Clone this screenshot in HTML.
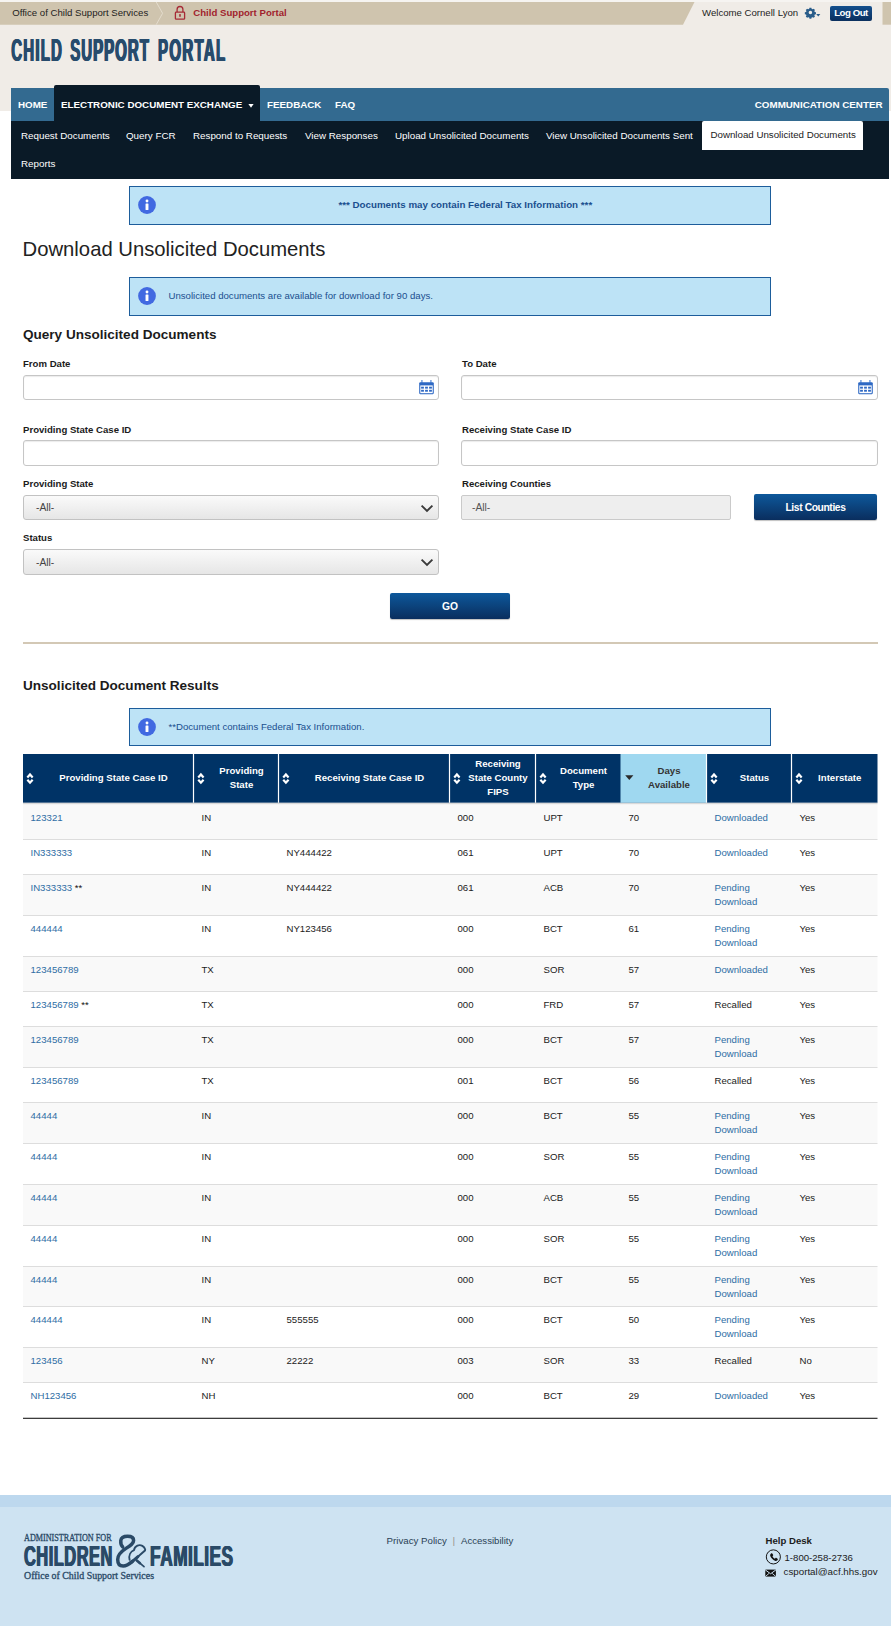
<!DOCTYPE html>
<html lang="en">
<head>
<meta charset="utf-8">
<title>Child Support Portal - Download Unsolicited Documents</title>
<style>
*{box-sizing:border-box;margin:0;padding:0}
html,body{width:891px;height:1626px;background:#fff;overflow:hidden}
body{font-family:"Liberation Sans",sans-serif;font-size:9.625px;color:#1b1b1b;position:relative}
a{text-decoration:none;color:#2e6da4}
.abs{position:absolute}
/* header */
#hdrbg{left:0;top:0;width:891px;height:110.7px;background:#f0ece7}
#welcome{left:702px;top:7px;font-size:9.625px;color:#1d1d1d;white-space:nowrap}
#logout{left:830px;top:6px;width:42px;height:14.5px;background:linear-gradient(#15508d,#0a2f5e);color:#fff;font-size:9.625px;font-weight:bold;text-align:center;line-height:14.5px;border-radius:2px;letter-spacing:-0.45px}
/* nav */
#nav{left:11px;top:88px;width:877.7px;height:32.6px;background:#336a90;border-radius:0 2px 0 0}
#nav span{position:absolute;top:11px;font-size:9.8px;font-weight:bold;color:#fff;white-space:nowrap}
#navtab{left:54px;top:85px;width:206px;height:36.5px;background:#0a1a27;border-radius:2px 2px 0 0}
#subnav{left:11px;top:120.5px;width:877.7px;height:58px;background:#0a1a27}
.sn{font-size:9.8px;color:#fff;white-space:nowrap}
#subsel{left:701.8px;top:121.3px;width:161.2px;height:28.6px;background:#fff;border-radius:2px 2px 0 0}
/* info boxes */
.info{background:#bde3f6;border:1px solid #1d5d9b;height:39px;left:129px;width:642px;font-size:9.625px;color:#1a4f8f}
.info .ic{position:absolute;left:7px;top:8px;width:20px;height:20px}
.info .tx{position:absolute;left:38.5px;top:12px;white-space:nowrap}
h1{font-weight:normal;font-size:20.25px;color:#222;left:22.6px;top:237.5px;white-space:nowrap}
h2{font-weight:bold;font-size:13.55px;color:#1b1b1b;white-space:nowrap}
.lbl{font-size:9.6px;font-weight:bold;color:#1b1b1b;white-space:nowrap}
.inp{height:26px;border:1px solid #c6c6c6;border-radius:3px;background:#fff;box-shadow:inset 0 1px 1px rgba(0,0,0,.08)}
.sel{height:25px;border:1px solid #c2c2c2;border-radius:3px;background:linear-gradient(#fafafa,#e6e6e6);font-size:10.3px;color:#444;line-height:24px;padding-left:12px}
.dis{height:24px;border:1px solid #cacaca;border-radius:2px;background:#eeeeee;font-size:10.3px;color:#555;line-height:23.6px;padding-left:10px}
.btn{height:25px;border-radius:2px;background:linear-gradient(#0d589b,#0a2e5e);color:#fff;font-size:10.3px;font-weight:bold;text-align:center;line-height:25px;box-shadow:0 1px 1px rgba(0,0,0,.25)}
#hr{left:23px;top:642px;width:854.6px;height:2px;background:#d3c8b5}
/* table */
.th{font-size:9.625px;font-weight:bold;line-height:14px;text-align:center;white-space:nowrap}
.td{font-size:9.625px;line-height:13.75px;color:#1b1b1b;white-space:nowrap}
.td a{color:#2e6da4}
.st{color:#111}
/* footer */
#ftop{left:0;top:1495px;width:891px;height:12px;background:#bdd8ee}
#foot{left:0;top:1507px;width:891px;height:119px;background:#cee3f2}
</style>
</head>
<body>
<div class="abs" id="hdrbg"></div>
<svg class="abs" style="left:0;top:0" width="891" height="26" viewBox="0 0 891 26">
  <rect x="0" y="0" width="891" height="2" fill="#f6f4f1"/>
  <polygon points="0,2 694.5,2 683,24.7 0,24.7" fill="#cfc4ae"/>
  <rect x="882.5" y="2" width="8.5" height="22.7" fill="#cfc4ae"/>
  <polyline points="156.2,2 162.6,13.3 156.2,24.7" fill="none" stroke="#e4dccd" stroke-width="1"/>
  <g fill="none" stroke="#a62a36" stroke-width="1.3">
    <path d="M177.1 12v-2.6a2.9 2.9 0 0 1 5.8 0V12"/>
    <rect x="175.4" y="12.2" width="9.2" height="7" rx="0.8"/>
  </g>
  <path d="M179 14.3h2l-0.5 2.6h-1z" fill="#a62a36"/>
  <g transform="translate(810.4,12.5) scale(0.93)" fill="#2a5d8a">
    <path d="M-1 -5.2h2l.3 1.3 1.1.45 1.15-.7 1.4 1.4-.7 1.15.45 1.1 1.3.3v2l-1.3.3-.45 1.1.7 1.15-1.4 1.4-1.15-.7-1.1.45-.3 1.3h-2l-.3-1.3-1.1-.45-1.15.7-1.4-1.4.7-1.15-.45-1.1-1.3-.3v-2l1.3-.3.45-1.1-.7-1.15 1.4-1.4 1.15.7 1.1-.45z M0 -1.9a1.9 1.9 0 1 0 0 3.8a1.9 1.9 0 1 0 0-3.8z" fill-rule="evenodd"/>
    </g>
  <path d="M816.2 13.9h4.1l-2.05 2.5z" fill="#2a5d8a"/>
</svg>
<div class="abs t1" style="left:12.2px;top:7px;font-size:9.625px;color:#1d1d1d;white-space:nowrap">Office of Child Support Services</div>
<div class="abs t2" style="left:193.3px;top:7px;font-size:9.625px;color:#a11f2d;font-weight:bold;white-space:nowrap">Child Support Portal</div>
<div class="abs" id="welcome">Welcome Cornell Lyon</div>
<div class="abs" id="logout">Log Out</div>
<svg class="abs" style="left:0;top:30px" width="240" height="40" viewBox="0 0 240 40"><g font-family="Liberation Sans, sans-serif" font-weight="bold" font-size="32" fill="#274b6c"><text transform="translate(10.75,30.6) scale(0.47,1)" textLength="107.7" lengthAdjust="spacing">CHILD</text><text transform="translate(11.30,30.6) scale(0.47,1)" textLength="107.7" lengthAdjust="spacing">CHILD</text><text transform="translate(11.85,30.6) scale(0.47,1)" textLength="107.7" lengthAdjust="spacing">CHILD</text><text transform="translate(69.75,30.6) scale(0.47,1)" textLength="167.2" lengthAdjust="spacing">SUPPORT</text><text transform="translate(70.30,30.6) scale(0.47,1)" textLength="167.2" lengthAdjust="spacing">SUPPORT</text><text transform="translate(70.85,30.6) scale(0.47,1)" textLength="167.2" lengthAdjust="spacing">SUPPORT</text><text transform="translate(157.45,30.6) scale(0.47,1)" textLength="143.0" lengthAdjust="spacing">PORTAL</text><text transform="translate(158.00,30.6) scale(0.47,1)" textLength="143.0" lengthAdjust="spacing">PORTAL</text><text transform="translate(158.55,30.6) scale(0.47,1)" textLength="143.0" lengthAdjust="spacing">PORTAL</text></g></svg>
<!--TITLE-->
<div class="abs" id="nav">
  <span style="left:7px">HOME</span>
  <span style="left:256px">FEEDBACK</span>
  <span style="left:324px">FAQ</span>
  <span style="right:6.2px">COMMUNICATION CENTER</span>
</div>
<div class="abs" id="navtab"></div>
<div class="abs" id="subnav"></div>
<div class="abs" id="subsel"></div>
<div class="abs" id="subtxt">
  <span class="abs sn" style="left:21px;top:130px">Request Documents</span>
  <span class="abs sn" style="left:126px;top:130px">Query FCR</span>
  <span class="abs sn" style="left:193px;top:130px">Respond to Requests</span>
  <span class="abs sn" style="left:305px;top:130px">View Responses</span>
  <span class="abs sn" style="left:395px;top:130px">Upload Unsolicited Documents</span>
  <span class="abs sn" style="left:546px;top:130px">View Unsolicited Documents Sent</span>
  <span class="abs sn" style="left:710.5px;top:129px;color:#222;font-size:9.72px">Download Unsolicited Documents</span>
  <span class="abs sn" style="left:21px;top:158px">Reports</span>
</div>
<div class="abs" id="tabtxt" style="left:61px;top:99px;font-size:9.8px;font-weight:bold;color:#fff;white-space:nowrap">ELECTRONIC DOCUMENT EXCHANGE</div>
<svg class="abs" style="left:247px;top:102px" width="8" height="8" viewBox="0 0 8 8"><path d="M1.4 2.1h5.2L4 5.8z" fill="#fff"/></svg>

<div class="abs info" style="top:186px">
  <svg class="ic" viewBox="0 0 20 20"><circle cx="10" cy="10" r="8.9" fill="#4169e1"/><circle cx="10" cy="6" r="1.45" fill="#fff"/><rect x="8.55" y="8.5" width="2.9" height="6.4" rx="0.5" fill="#fff"/></svg>
  <div class="abs" style="left:0;top:11.7px;width:670.6px;text-align:center;font-weight:bold;white-space:nowrap;font-size:9.78px">*** Documents may contain Federal Tax Information ***</div>
</div>
<h1 class="abs">Download Unsolicited Documents</h1>
<div class="abs info" style="top:277px">
  <svg class="ic" viewBox="0 0 20 20"><circle cx="10" cy="10" r="8.9" fill="#4169e1"/><circle cx="10" cy="6" r="1.45" fill="#fff"/><rect x="8.55" y="8.5" width="2.9" height="6.4" rx="0.5" fill="#fff"/></svg>
  <div class="tx">Unsolicited documents are available for download for 90 days.</div>
</div>
<h2 class="abs" style="left:23px;top:327px">Query Unsolicited Documents</h2>

<div class="abs lbl" style="left:23px;top:358px">From Date</div>
<div class="abs inp" style="left:23px;top:375px;width:416px;height:25px"></div>
<svg class="abs" style="left:419px;top:380px" width="15" height="15" viewBox="0 0 15 15"><rect x="2.1" y="0" width="1.6" height="3.6" fill="#7ea6e0"/><rect x="11.1" y="0" width="1.6" height="3.6" fill="#7ea6e0"/><rect x="0.2" y="2.2" width="14.6" height="12" rx="1.1" fill="#2d68c4"/><rect x="1.3" y="5.4" width="12.4" height="7.8" fill="#fff"/><g fill="#2d68c4"><rect x="2.1" y="6.7" width="2.8" height="1.9"/><rect x="6.1" y="6.7" width="2.8" height="1.9"/><rect x="10.1" y="6.7" width="2.8" height="1.9"/><rect x="2.1" y="9.8" width="2.8" height="1.9"/><rect x="6.1" y="9.8" width="2.8" height="1.9"/><rect x="10.1" y="9.8" width="2.8" height="1.9"/></g></svg>
<div class="abs lbl" style="left:462px;top:358px">To Date</div>
<div class="abs inp" style="left:461px;top:375px;width:417px;height:25px"></div>
<svg class="abs" style="left:858px;top:380px" width="15" height="15" viewBox="0 0 15 15"><rect x="2.1" y="0" width="1.6" height="3.6" fill="#7ea6e0"/><rect x="11.1" y="0" width="1.6" height="3.6" fill="#7ea6e0"/><rect x="0.2" y="2.2" width="14.6" height="12" rx="1.1" fill="#2d68c4"/><rect x="1.3" y="5.4" width="12.4" height="7.8" fill="#fff"/><g fill="#2d68c4"><rect x="2.1" y="6.7" width="2.8" height="1.9"/><rect x="6.1" y="6.7" width="2.8" height="1.9"/><rect x="10.1" y="6.7" width="2.8" height="1.9"/><rect x="2.1" y="9.8" width="2.8" height="1.9"/><rect x="6.1" y="9.8" width="2.8" height="1.9"/><rect x="10.1" y="9.8" width="2.8" height="1.9"/></g></svg>
<div class="abs lbl" style="left:23px;top:424px">Providing State Case ID</div>
<div class="abs inp" style="left:23px;top:440px;width:416px"></div>
<div class="abs lbl" style="left:462px;top:424px">Receiving State Case ID</div>
<div class="abs inp" style="left:461px;top:440px;width:417px"></div>
<div class="abs lbl" style="left:23px;top:478px">Providing State</div>
<div class="abs sel" style="left:23px;top:495px;width:415.6px;height:24.5px">-All-</div>
<svg class="abs" style="left:419.5px;top:503.7px" width="14" height="9" viewBox="0 0 14 9"><path d="M1.6 1.6L7 6.9L12.4 1.6" fill="none" stroke="#3a3a3a" stroke-width="1.9"/></svg>
<div class="abs lbl" style="left:462px;top:478px">Receiving Counties</div>
<div class="abs dis" style="left:461px;top:495px;width:270px;height:25px">-All-</div>
<div class="abs btn" style="left:754px;top:494px;width:123px;height:25.6px;line-height:28.4px;letter-spacing:-0.4px">List Counties</div>
<div class="abs lbl" style="left:23px;top:532px">Status</div>
<div class="abs sel" style="left:23px;top:549px;width:415.6px;height:26px;line-height:25px">-All-</div>
<svg class="abs" style="left:419.5px;top:558.2px" width="14" height="9" viewBox="0 0 14 9"><path d="M1.6 1.6L7 6.9L12.4 1.6" fill="none" stroke="#3a3a3a" stroke-width="1.9"/></svg>
<div class="abs btn" style="left:390px;top:593px;width:120px;height:25.6px;line-height:28.4px">GO</div>
<div class="abs" id="hr"></div>

<h2 class="abs" style="left:23px;top:678px">Unsolicited Document Results</h2>
<div class="abs info" style="top:708px;height:38px">
  <svg class="ic" viewBox="0 0 20 20"><circle cx="10" cy="10" r="8.9" fill="#4169e1"/><circle cx="10" cy="6" r="1.45" fill="#fff"/><rect x="8.55" y="8.5" width="2.9" height="6.4" rx="0.5" fill="#fff"/></svg>
  <div class="tx">**Document contains Federal Tax Information.</div>
</div>
<!--TABLE-->
<svg class="abs" style="left:23.0px;top:754.0px" width="854.5" height="666.0" viewBox="0 0 854.5 666.0">
<rect x="0" y="0" width="854.5" height="48.8" fill="#003366"/>
<rect x="597.5" y="0" width="85.8" height="48.8" fill="#9fd8f0"/>
<rect x="169.9" y="0" width="1.2" height="48.8" fill="#fff"/>
<rect x="254.9" y="0" width="1.2" height="48.8" fill="#fff"/>
<rect x="425.9" y="0" width="1.2" height="48.8" fill="#fff"/>
<rect x="511.9" y="0" width="1.2" height="48.8" fill="#fff"/>
<rect x="682.9" y="0" width="1.2" height="48.8" fill="#fff"/>
<rect x="767.9" y="0" width="1.2" height="48.8" fill="#fff"/>
<rect x="0" y="50.0" width="854.5" height="35" fill="#f9f9f9"/>
<rect x="0" y="121.0" width="854.5" height="40" fill="#f9f9f9"/>
<rect x="0" y="203.0" width="854.5" height="34" fill="#f9f9f9"/>
<rect x="0" y="273.0" width="854.5" height="40" fill="#f9f9f9"/>
<rect x="0" y="349.0" width="854.5" height="40" fill="#f9f9f9"/>
<rect x="0" y="431.0" width="854.5" height="40" fill="#f9f9f9"/>
<rect x="0" y="513.0" width="854.5" height="39" fill="#f9f9f9"/>
<rect x="0" y="594.0" width="854.5" height="34" fill="#f9f9f9"/>
<rect x="0" y="48.8" width="854.5" height="1.4" fill="#d9d9d9"/>
<rect x="0" y="85.0" width="854.5" height="1" fill="#dddddd"/>
<rect x="0" y="120.0" width="854.5" height="1" fill="#dddddd"/>
<rect x="0" y="161.0" width="854.5" height="1" fill="#dddddd"/>
<rect x="0" y="202.0" width="854.5" height="1" fill="#dddddd"/>
<rect x="0" y="237.0" width="854.5" height="1" fill="#dddddd"/>
<rect x="0" y="272.0" width="854.5" height="1" fill="#dddddd"/>
<rect x="0" y="313.0" width="854.5" height="1" fill="#dddddd"/>
<rect x="0" y="348.0" width="854.5" height="1" fill="#dddddd"/>
<rect x="0" y="389.0" width="854.5" height="1" fill="#dddddd"/>
<rect x="0" y="430.0" width="854.5" height="1" fill="#dddddd"/>
<rect x="0" y="471.0" width="854.5" height="1" fill="#dddddd"/>
<rect x="0" y="512.0" width="854.5" height="1" fill="#dddddd"/>
<rect x="0" y="552.0" width="854.5" height="1" fill="#dddddd"/>
<rect x="0" y="593.0" width="854.5" height="1" fill="#dddddd"/>
<rect x="0" y="628.0" width="854.5" height="1" fill="#dddddd"/>
<rect x="0" y="663.75" width="854.5" height="1.1" fill="#1c1c1c"/>
<g transform="translate(7.0,24.4)" fill="none" stroke="#fff" stroke-width="2.2" stroke-linecap="butt" stroke-linejoin="miter"><path d="M-2.65 -1.0L0 -3.9L2.65 -1.0"/><path d="M-2.65 1.4L0 4.3L2.65 1.4"/></g>
<g transform="translate(177.9,24.4)" fill="none" stroke="#fff" stroke-width="2.2" stroke-linecap="butt" stroke-linejoin="miter"><path d="M-2.65 -1.0L0 -3.9L2.65 -1.0"/><path d="M-2.65 1.4L0 4.3L2.65 1.4"/></g>
<g transform="translate(262.9,24.4)" fill="none" stroke="#fff" stroke-width="2.2" stroke-linecap="butt" stroke-linejoin="miter"><path d="M-2.65 -1.0L0 -3.9L2.65 -1.0"/><path d="M-2.65 1.4L0 4.3L2.65 1.4"/></g>
<g transform="translate(433.9,24.4)" fill="none" stroke="#fff" stroke-width="2.2" stroke-linecap="butt" stroke-linejoin="miter"><path d="M-2.65 -1.0L0 -3.9L2.65 -1.0"/><path d="M-2.65 1.4L0 4.3L2.65 1.4"/></g>
<g transform="translate(520.0,24.4)" fill="none" stroke="#fff" stroke-width="2.2" stroke-linecap="butt" stroke-linejoin="miter"><path d="M-2.65 -1.0L0 -3.9L2.65 -1.0"/><path d="M-2.65 1.4L0 4.3L2.65 1.4"/></g>
<g transform="translate(691.0,24.4)" fill="none" stroke="#fff" stroke-width="2.2" stroke-linecap="butt" stroke-linejoin="miter"><path d="M-2.65 -1.0L0 -3.9L2.65 -1.0"/><path d="M-2.65 1.4L0 4.3L2.65 1.4"/></g>
<g transform="translate(776.0,24.4)" fill="none" stroke="#fff" stroke-width="2.2" stroke-linecap="butt" stroke-linejoin="miter"><path d="M-2.65 -1.0L0 -3.9L2.65 -1.0"/><path d="M-2.65 1.4L0 4.3L2.65 1.4"/></g>
<path d="M602.2 21.3h8.2l-4.1 4.8z" fill="#2b2b2b"/>
</svg>
<div class="abs th" style="left:36.5px;top:771.4px;width:154px;color:#fff">Providing State Case ID</div>
<div class="abs th" style="left:207.5px;top:764.4px;width:68px;color:#fff">Providing<br>State</div>
<div class="abs th" style="left:292.5px;top:771.4px;width:154px;color:#fff">Receiving State Case ID</div>
<div class="abs th" style="left:463.5px;top:757.4px;width:69px;color:#fff">Receiving<br>State County<br>FIPS</div>
<div class="abs th" style="left:549.5px;top:764.4px;width:68px;color:#fff">Document<br>Type</div>
<div class="abs th" style="left:634.5px;top:764.4px;width:69px;color:#333">Days<br>Available</div>
<div class="abs th" style="left:720.5px;top:771.4px;width:68px;color:#fff">Status</div>
<div class="abs th" style="left:805.5px;top:771.4px;width:68.5px;color:#fff">Interstate</div>
<div class="abs td" style="left:30.5px;top:811.0px"><a>123321</a></div>
<div class="abs td" style="left:201.5px;top:811.0px">IN</div>
<div class="abs td" style="left:457.5px;top:811.0px">000</div>
<div class="abs td" style="left:543.5px;top:811.0px">UPT</div>
<div class="abs td" style="left:628.5px;top:811.0px">70</div>
<div class="abs td" style="left:714.5px;top:811.0px"><a>Downloaded</a></div>
<div class="abs td" style="left:799.5px;top:811.0px">Yes</div>
<div class="abs td" style="left:30.5px;top:846.0px"><a>IN333333</a></div>
<div class="abs td" style="left:201.5px;top:846.0px">IN</div>
<div class="abs td" style="left:286.5px;top:846.0px">NY444422</div>
<div class="abs td" style="left:457.5px;top:846.0px">061</div>
<div class="abs td" style="left:543.5px;top:846.0px">UPT</div>
<div class="abs td" style="left:628.5px;top:846.0px">70</div>
<div class="abs td" style="left:714.5px;top:846.0px"><a>Downloaded</a></div>
<div class="abs td" style="left:799.5px;top:846.0px">Yes</div>
<div class="abs td" style="left:30.5px;top:881.0px"><a>IN333333</a><span class="st"> **</span></div>
<div class="abs td" style="left:201.5px;top:881.0px">IN</div>
<div class="abs td" style="left:286.5px;top:881.0px">NY444422</div>
<div class="abs td" style="left:457.5px;top:881.0px">061</div>
<div class="abs td" style="left:543.5px;top:881.0px">ACB</div>
<div class="abs td" style="left:628.5px;top:881.0px">70</div>
<div class="abs td" style="left:714.5px;top:881.0px"><a>Pending<br>Download</a></div>
<div class="abs td" style="left:799.5px;top:881.0px">Yes</div>
<div class="abs td" style="left:30.5px;top:922.0px"><a>444444</a></div>
<div class="abs td" style="left:201.5px;top:922.0px">IN</div>
<div class="abs td" style="left:286.5px;top:922.0px">NY123456</div>
<div class="abs td" style="left:457.5px;top:922.0px">000</div>
<div class="abs td" style="left:543.5px;top:922.0px">BCT</div>
<div class="abs td" style="left:628.5px;top:922.0px">61</div>
<div class="abs td" style="left:714.5px;top:922.0px"><a>Pending<br>Download</a></div>
<div class="abs td" style="left:799.5px;top:922.0px">Yes</div>
<div class="abs td" style="left:30.5px;top:963.0px"><a>123456789</a></div>
<div class="abs td" style="left:201.5px;top:963.0px">TX</div>
<div class="abs td" style="left:457.5px;top:963.0px">000</div>
<div class="abs td" style="left:543.5px;top:963.0px">SOR</div>
<div class="abs td" style="left:628.5px;top:963.0px">57</div>
<div class="abs td" style="left:714.5px;top:963.0px"><a>Downloaded</a></div>
<div class="abs td" style="left:799.5px;top:963.0px">Yes</div>
<div class="abs td" style="left:30.5px;top:998.0px"><a>123456789</a><span class="st"> **</span></div>
<div class="abs td" style="left:201.5px;top:998.0px">TX</div>
<div class="abs td" style="left:457.5px;top:998.0px">000</div>
<div class="abs td" style="left:543.5px;top:998.0px">FRD</div>
<div class="abs td" style="left:628.5px;top:998.0px">57</div>
<div class="abs td" style="left:714.5px;top:998.0px">Recalled</div>
<div class="abs td" style="left:799.5px;top:998.0px">Yes</div>
<div class="abs td" style="left:30.5px;top:1033.0px"><a>123456789</a></div>
<div class="abs td" style="left:201.5px;top:1033.0px">TX</div>
<div class="abs td" style="left:457.5px;top:1033.0px">000</div>
<div class="abs td" style="left:543.5px;top:1033.0px">BCT</div>
<div class="abs td" style="left:628.5px;top:1033.0px">57</div>
<div class="abs td" style="left:714.5px;top:1033.0px"><a>Pending<br>Download</a></div>
<div class="abs td" style="left:799.5px;top:1033.0px">Yes</div>
<div class="abs td" style="left:30.5px;top:1074.0px"><a>123456789</a></div>
<div class="abs td" style="left:201.5px;top:1074.0px">TX</div>
<div class="abs td" style="left:457.5px;top:1074.0px">001</div>
<div class="abs td" style="left:543.5px;top:1074.0px">BCT</div>
<div class="abs td" style="left:628.5px;top:1074.0px">56</div>
<div class="abs td" style="left:714.5px;top:1074.0px">Recalled</div>
<div class="abs td" style="left:799.5px;top:1074.0px">Yes</div>
<div class="abs td" style="left:30.5px;top:1109.0px"><a>44444</a></div>
<div class="abs td" style="left:201.5px;top:1109.0px">IN</div>
<div class="abs td" style="left:457.5px;top:1109.0px">000</div>
<div class="abs td" style="left:543.5px;top:1109.0px">BCT</div>
<div class="abs td" style="left:628.5px;top:1109.0px">55</div>
<div class="abs td" style="left:714.5px;top:1109.0px"><a>Pending<br>Download</a></div>
<div class="abs td" style="left:799.5px;top:1109.0px">Yes</div>
<div class="abs td" style="left:30.5px;top:1150.0px"><a>44444</a></div>
<div class="abs td" style="left:201.5px;top:1150.0px">IN</div>
<div class="abs td" style="left:457.5px;top:1150.0px">000</div>
<div class="abs td" style="left:543.5px;top:1150.0px">SOR</div>
<div class="abs td" style="left:628.5px;top:1150.0px">55</div>
<div class="abs td" style="left:714.5px;top:1150.0px"><a>Pending<br>Download</a></div>
<div class="abs td" style="left:799.5px;top:1150.0px">Yes</div>
<div class="abs td" style="left:30.5px;top:1191.0px"><a>44444</a></div>
<div class="abs td" style="left:201.5px;top:1191.0px">IN</div>
<div class="abs td" style="left:457.5px;top:1191.0px">000</div>
<div class="abs td" style="left:543.5px;top:1191.0px">ACB</div>
<div class="abs td" style="left:628.5px;top:1191.0px">55</div>
<div class="abs td" style="left:714.5px;top:1191.0px"><a>Pending<br>Download</a></div>
<div class="abs td" style="left:799.5px;top:1191.0px">Yes</div>
<div class="abs td" style="left:30.5px;top:1232.0px"><a>44444</a></div>
<div class="abs td" style="left:201.5px;top:1232.0px">IN</div>
<div class="abs td" style="left:457.5px;top:1232.0px">000</div>
<div class="abs td" style="left:543.5px;top:1232.0px">SOR</div>
<div class="abs td" style="left:628.5px;top:1232.0px">55</div>
<div class="abs td" style="left:714.5px;top:1232.0px"><a>Pending<br>Download</a></div>
<div class="abs td" style="left:799.5px;top:1232.0px">Yes</div>
<div class="abs td" style="left:30.5px;top:1273.0px"><a>44444</a></div>
<div class="abs td" style="left:201.5px;top:1273.0px">IN</div>
<div class="abs td" style="left:457.5px;top:1273.0px">000</div>
<div class="abs td" style="left:543.5px;top:1273.0px">BCT</div>
<div class="abs td" style="left:628.5px;top:1273.0px">55</div>
<div class="abs td" style="left:714.5px;top:1273.0px"><a>Pending<br>Download</a></div>
<div class="abs td" style="left:799.5px;top:1273.0px">Yes</div>
<div class="abs td" style="left:30.5px;top:1313.0px"><a>444444</a></div>
<div class="abs td" style="left:201.5px;top:1313.0px">IN</div>
<div class="abs td" style="left:286.5px;top:1313.0px">555555</div>
<div class="abs td" style="left:457.5px;top:1313.0px">000</div>
<div class="abs td" style="left:543.5px;top:1313.0px">BCT</div>
<div class="abs td" style="left:628.5px;top:1313.0px">50</div>
<div class="abs td" style="left:714.5px;top:1313.0px"><a>Pending<br>Download</a></div>
<div class="abs td" style="left:799.5px;top:1313.0px">Yes</div>
<div class="abs td" style="left:30.5px;top:1354.0px"><a>123456</a></div>
<div class="abs td" style="left:201.5px;top:1354.0px">NY</div>
<div class="abs td" style="left:286.5px;top:1354.0px">22222</div>
<div class="abs td" style="left:457.5px;top:1354.0px">003</div>
<div class="abs td" style="left:543.5px;top:1354.0px">SOR</div>
<div class="abs td" style="left:628.5px;top:1354.0px">33</div>
<div class="abs td" style="left:714.5px;top:1354.0px">Recalled</div>
<div class="abs td" style="left:799.5px;top:1354.0px">No</div>
<div class="abs td" style="left:30.5px;top:1389.0px"><a>NH123456</a></div>
<div class="abs td" style="left:201.5px;top:1389.0px">NH</div>
<div class="abs td" style="left:457.5px;top:1389.0px">000</div>
<div class="abs td" style="left:543.5px;top:1389.0px">BCT</div>
<div class="abs td" style="left:628.5px;top:1389.0px">29</div>
<div class="abs td" style="left:714.5px;top:1389.0px"><a>Downloaded</a></div>
<div class="abs td" style="left:799.5px;top:1389.0px">Yes</div>
<!--ENDTABLE-->
<!--ENDBODY-->
<div class="abs" id="ftop"></div>
<div class="abs" id="foot"></div>
<svg class="abs" style="left:0;top:1525px" width="260" height="70" viewBox="0 0 260 70"><g font-family="Liberation Sans, sans-serif" font-weight="bold" font-size="29.6" fill="#2a4a67"><text transform="translate(23.40,41.2) scale(0.555,1)" textLength="159.6" lengthAdjust="spacing">CHILDREN</text><text transform="translate(23.90,41.2) scale(0.555,1)" textLength="159.6" lengthAdjust="spacing">CHILDREN</text><text transform="translate(24.40,41.2) scale(0.555,1)" textLength="159.6" lengthAdjust="spacing">CHILDREN</text><text transform="translate(149.60,41.2) scale(0.585,1)" textLength="141.9" lengthAdjust="spacing">FAMILIES</text><text transform="translate(150.10,41.2) scale(0.585,1)" textLength="141.9" lengthAdjust="spacing">FAMILIES</text><text transform="translate(150.60,41.2) scale(0.585,1)" textLength="141.9" lengthAdjust="spacing">FAMILIES</text></g><g transform="translate(110,5)" fill="none" stroke="#2a4a67" stroke-linecap="round" stroke-linejoin="round"><path d="M12.6 16.8C10.6 14.8 10.7 12 10.8 10.6C11.2 7.6 14 6.2 17.6 6.2C21.2 6.2 23.6 7.8 23.6 10.4C23.6 13.4 20.6 15.4 16 18.4C11 21.6 7.7 25 7.7 29.4C7.7 33.4 9.6 36 13.2 36C16.6 36 19.6 33.8 22.4 31.4" stroke-width="3.5"/><path d="M21.6 32.2L28 26.6" stroke-width="3"/><path d="M27 27.4L35 20.6" stroke-width="2"/><path d="M26.8 30.4L30 33.2" stroke-width="2.6"/><path d="M29 32.3L34 36.6" stroke-width="1.7"/><path d="M19.6 29.8C18.6 25.6 20.4 21.6 24 20.2C24.4 17.8 25.6 16.4 27.4 15.6C31 14 34.4 16.6 35.2 19.6" stroke-width="1.9"/></g><text x="24" y="16.2" font-family="Liberation Serif, serif" font-size="9.3" fill="#2a4a67" stroke="#2a4a67" stroke-width="0.3" textLength="87.6" lengthAdjust="spacingAndGlyphs">ADMINISTRATION FOR</text><text x="24" y="53.9" font-family="Liberation Serif, serif" font-size="9.6" fill="#2a4a67" stroke="#2a4a67" stroke-width="0.3" textLength="130" lengthAdjust="spacingAndGlyphs">Office of Child Support Services</text></svg>
<div class="abs" style="left:386.6px;top:1535px;font-size:9.7px;color:#2a3f55;white-space:nowrap">Privacy Policy</div>
<div class="abs" style="left:452.8px;top:1536px;font-size:8.3px;color:#8a7d7b">|</div>
<div class="abs" style="left:461px;top:1535px;font-size:9.625px;color:#2a3f55;white-space:nowrap">Accessibility</div>
<div class="abs" style="left:765.5px;top:1535px;font-size:9.625px;font-weight:bold;color:#1b1b1b;white-space:nowrap">Help Desk</div>
<svg class="abs" style="left:764px;top:1549px" width="18" height="32" viewBox="0 0 18 32">
  <circle cx="9.35" cy="7.9" r="7.05" fill="none" stroke="#151515" stroke-width="1"/>
  <path transform="translate(9.45,7.7) scale(0.86) translate(-9,-8.3)" d="M6.2 4.6c.5-.5 1-.5 1.4 0l1 1.3c.3.5.2.9-.2 1.3l-.6.5c.6 1.3 1.500 2.200 2.800 2.900l.6-.6c.4-.4.8-.5 1.300-.2l1.300 1c.5.4.5.9 0 1.400l-.6.6c-.6.600-1.500.700-2.400.300C8.500 12 6.200 9.700 5.300 7.400c-.3-.9-.2-1.700.4-2.300z" fill="#111"/>
  <rect x="1.300" y="20.600" width="10.600" height="7" fill="#111"/>
  <path d="M1.300 20.900l5.300 3.900l5.300-3.900" fill="none" stroke="#cfe3f2" stroke-width="1"/>
  <path d="M1.300 27.600l3.700-3.200M11.900 27.600l-3.700-3.200" fill="none" stroke="#cfe3f2" stroke-width="0.9"/>
</svg>
<div class="abs" style="left:784.5px;top:1552px;font-size:9.625px;color:#1b1b1b;white-space:nowrap">1-800-258-2736</div>
<div class="abs" style="left:783.5px;top:1566px;font-size:9.78px;color:#1b1b1b;white-space:nowrap">csportal@acf.hhs.gov</div>
</body>
</html>
